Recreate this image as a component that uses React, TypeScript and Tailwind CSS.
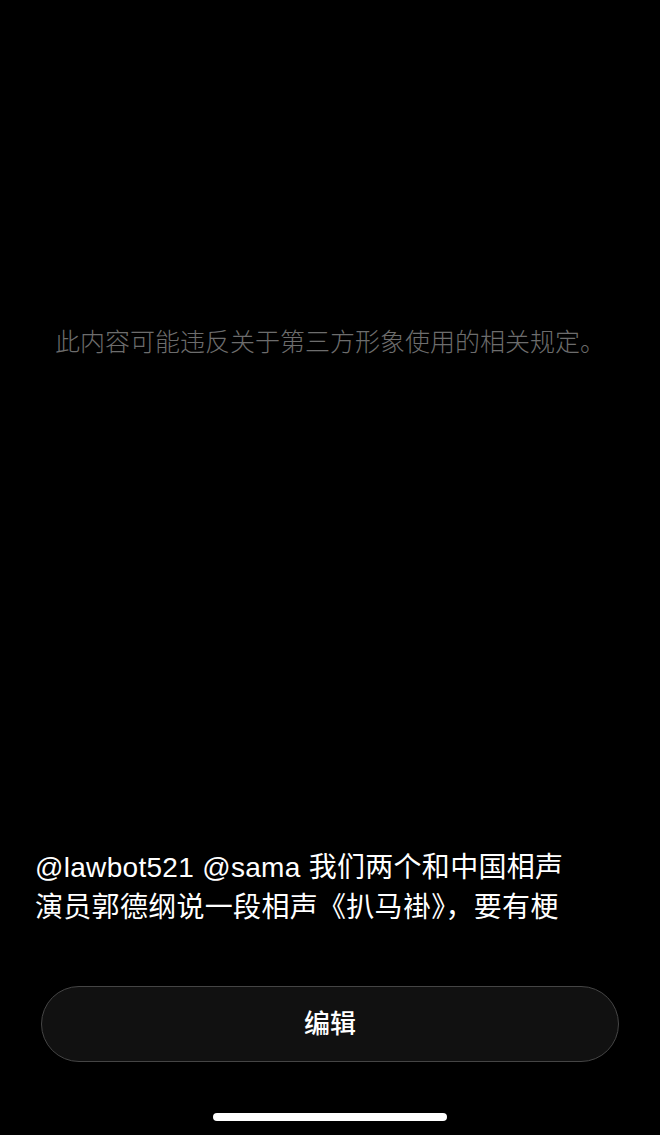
export default function App() {
  return (
    <div className="w-[660px] h-[1135px] bg-black flex flex-col overflow-hidden [font-family:'Liberation_Sans','Noto_Sans_CJK_SC',sans-serif]">
      {/* Blocked content notice */}
      <div className="pt-[323px] text-center text-[25px] leading-[38px] font-light text-[#6d6d6d]">
        此内容可能违反关于第三方形象使用的相关规定。
      </div>

      <div className="flex-1" />

      {/* Prompt */}
      <div className="px-[35px] text-[28px] leading-[40px] tracking-[0.3px] text-white">
        @lawbot521 @sama 我们两个和中国相声
        <br />
        演员郭德纲说一段相声《扒马褂》，要有梗
      </div>

      {/* Edit button */}
      <div className="mt-[58px] px-[41px]">
        <button className="w-full h-[76px] rounded-full bg-[#111111] border border-[#454545] text-white text-[26px] font-medium">
          编辑
        </button>
      </div>

      {/* Home indicator */}
      <div className="mt-[51px] mb-[14px] flex justify-center">
        <div className="w-[234px] h-[8px] rounded-full bg-white" />
      </div>
    </div>
  );
}
